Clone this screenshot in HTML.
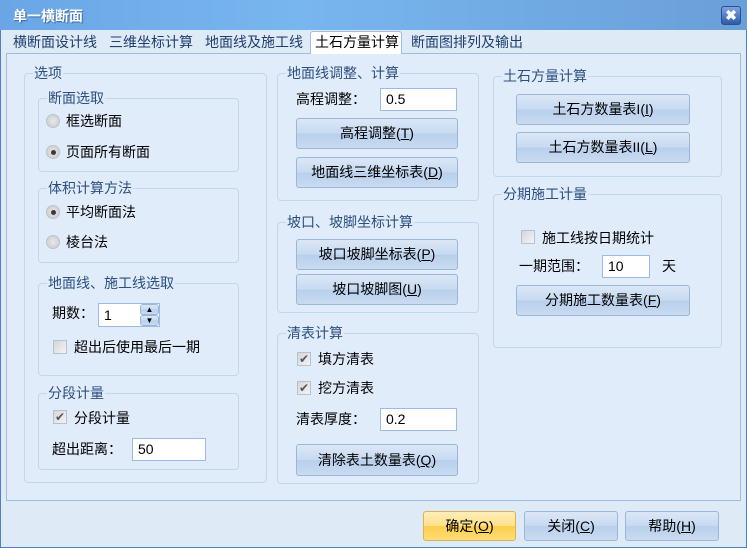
<!DOCTYPE html>
<html><head><meta charset="utf-8"><style>
*{box-sizing:border-box;margin:0;padding:0}
body{width:747px;height:548px;overflow:hidden;font-family:"Liberation Sans","Noto Sans CJK SC",sans-serif;font-size:13px;color:#000;background:#dfeaf7;position:relative}
.a{position:absolute;white-space:nowrap}
#win{position:absolute;left:0;top:0;width:747px;height:548px;border:1px solid #4f7fbf;background:#dfeaf7}
#title{position:absolute;left:0;top:0;width:747px;height:30px;background:linear-gradient(90deg,#6aa6e6,#78b6ef 40%,#6a9fd8);}
#title span{position:absolute;left:13px;top:6px;color:#fff;font-weight:bold;font-size:14px;text-shadow:1px 1px 1px #3d6aa0}
#close{position:absolute;left:721px;top:6px;width:20px;height:19px;border:1px solid #2c4f91;border-radius:3px;background:linear-gradient(#7fa3dd,#2e5aa8);color:#fff;font-weight:bold;font-size:14px;text-align:center;line-height:16px}
#tabs{position:absolute;left:6px;top:30px;width:735px;height:23px;background:#dfeaf7}
.tab{position:absolute;top:3px;color:#1f3e6c;font-size:14px}
#act{position:absolute;left:310px;top:31px;width:92px;height:23px;background:#fff;border:1px solid #9fbde0;border-bottom:none;border-radius:3px 3px 0 0}
#panel{position:absolute;left:6px;top:53px;width:735px;height:448px;background:#e1ecfa;border:1px solid #9cbde3}
.g{position:absolute;border:1px solid #c3d6ec;border-radius:4px}
.gl{position:absolute;top:-10px;left:8px;background:#e1ecfa;color:#2b4f7f;padding:0 1px;font-size:14px;line-height:18px}
.btn{position:absolute;border:1px solid #9ab6da;border-radius:3px;background:linear-gradient(#dbe7f6,#c7daf1 50%,#b8cfec 51%,#c9dbf0);text-align:center;font-size:14px;color:#000}
.inp{position:absolute;background:#fff;border:1px solid #9cbbe4;padding-left:5px;font-size:14px}
.rad{position:absolute;width:14px;height:14px;border-radius:50%;border:1px solid #b9c4d0;background:radial-gradient(#e9e9e9,#c8c8c8)}
.rad.on::after{content:"";position:absolute;left:4px;top:4px;width:5px;height:5px;border-radius:50%;background:#3a3a3a}
.chk{position:absolute;width:14px;height:14px;border:1px solid #b5c2d2;background:linear-gradient(135deg,#d6d6d6,#f4f4f4);font-size:12px;line-height:12px;color:#556;text-align:center}
.t{position:absolute;white-space:nowrap;font-size:14px;margin-top:-2px}
u{text-decoration:underline}
</style></head><body>
<div id="win"></div>
<div id="title"><span>单一横断面</span><div id="close">✖</div></div>
<div id="tabs"></div>
<div id="panel"></div>
<div id="act"></div>
<span class="tab a" style="left:13px;top:32px">横断面设计线</span>
<span class="tab a" style="left:109px;top:32px">三维坐标计算</span>
<span class="tab a" style="left:205px;top:32px">地面线及施工线</span>
<span class="tab a" style="left:315px;top:32px;color:#000">土石方量计算</span>
<span class="tab a" style="left:411px;top:32px">断面图排列及输出</span>

<div class="g" style="left:24px;top:73px;width:243px;height:410px"><span class="gl" style="left:8px">选项</span></div>
<div class="g" style="left:38px;top:98px;width:201px;height:74px"><span class="gl">断面选取</span></div>
<div class="rad" style="left:46px;top:114px"></div><span class="t" style="left:66px;top:113px">框选断面</span>
<div class="rad on" style="left:46px;top:145px"></div><span class="t" style="left:66px;top:144px">页面所有断面</span>
<div class="g" style="left:38px;top:188px;width:201px;height:75px"><span class="gl">体积计算方法</span></div>
<div class="rad on" style="left:46px;top:205px"></div><span class="t" style="left:66px;top:204px">平均断面法</span>
<div class="rad" style="left:46px;top:235px"></div><span class="t" style="left:66px;top:234px">棱台法</span>
<div class="g" style="left:38px;top:283px;width:201px;height:93px"><span class="gl">地面线、施工线选取</span></div>
<span class="t" style="left:52px;top:305px">期数：</span>
<div class="inp" style="left:98px;top:303px;width:62px;height:24px;line-height:22px">1</div>
<div class="btn" style="left:140px;top:304px;width:19px;height:11px;font-size:8px;line-height:9px">▲</div>
<div class="btn" style="left:140px;top:315px;width:19px;height:11px;font-size:8px;line-height:9px">▼</div>
<div class="chk" style="left:53px;top:340px"></div><span class="t" style="left:74px;top:339px">超出后使用最后一期</span>
<div class="g" style="left:38px;top:393px;width:201px;height:77px"><span class="gl">分段计量</span></div>
<div class="chk" style="left:53px;top:410px">✔</div><span class="t" style="left:74px;top:410px">分段计量</span>
<span class="t" style="left:52px;top:441px">超出距离：</span>
<div class="inp" style="left:132px;top:438px;width:74px;height:23px;line-height:21px">50</div>

<div class="g" style="left:277px;top:73px;width:202px;height:128px"><span class="gl">地面线调整、计算</span></div>
<span class="t" style="left:296px;top:91px">高程调整：</span>
<div class="inp" style="left:380px;top:88px;width:77px;height:23px;line-height:21px">0.5</div>
<div class="btn" style="left:296px;top:118px;width:162px;height:31px;line-height:29px">高程调整(<u>T</u>)</div>
<div class="btn" style="left:296px;top:157px;width:162px;height:31px;line-height:29px">地面线三维坐标表(<u>D</u>)</div>
<div class="g" style="left:277px;top:222px;width:202px;height:91px"><span class="gl">坡口、坡脚坐标计算</span></div>
<div class="btn" style="left:296px;top:239px;width:162px;height:31px;line-height:29px">坡口坡脚坐标表(<u>P</u>)</div>
<div class="btn" style="left:296px;top:274px;width:162px;height:31px;line-height:29px">坡口坡脚图(<u>U</u>)</div>
<div class="g" style="left:277px;top:333px;width:202px;height:151px"><span class="gl">清表计算</span></div>
<div class="chk" style="left:297px;top:352px">✔</div><span class="t" style="left:318px;top:351px">填方清表</span>
<div class="chk" style="left:297px;top:381px">✔</div><span class="t" style="left:318px;top:380px">挖方清表</span>
<span class="t" style="left:296px;top:411px">清表厚度：</span>
<div class="inp" style="left:380px;top:408px;width:77px;height:23px;line-height:21px">0.2</div>
<div class="btn" style="left:296px;top:444px;width:162px;height:32px;line-height:30px">清除表土数量表(<u>Q</u>)</div>

<div class="g" style="left:493px;top:76px;width:229px;height:101px"><span class="gl">土石方量计算</span></div>
<div class="btn" style="left:516px;top:94px;width:174px;height:31px;line-height:29px">土石方数量表I(<u>I</u>)</div>
<div class="btn" style="left:516px;top:132px;width:174px;height:31px;line-height:29px">土石方数量表II(<u>L</u>)</div>
<div class="g" style="left:493px;top:194px;width:229px;height:154px"><span class="gl">分期施工计量</span></div>
<div class="chk" style="left:521px;top:230px"></div><span class="t" style="left:542px;top:230px">施工线按日期统计</span>
<span class="t" style="left:519px;top:258px">一期范围：</span>
<div class="inp" style="left:602px;top:255px;width:48px;height:23px;line-height:21px">10</div>
<span class="t" style="left:662px;top:258px">天</span>
<div class="btn" style="left:516px;top:285px;width:174px;height:31px;line-height:29px">分期施工数量表(<u>F</u>)</div>

<div class="btn" style="left:423px;top:511px;width:93px;height:30px;line-height:28px;border-color:#d9b35a;background:linear-gradient(#fdeeb8,#fde08a 50%,#fdcf48 51%,#fedc78)">确定(<u>O</u>)</div>
<div class="btn" style="left:524px;top:511px;width:94px;height:30px;line-height:28px">关闭(<u>C</u>)</div>
<div class="btn" style="left:625px;top:511px;width:94px;height:30px;line-height:28px">帮助(<u>H</u>)</div>
</body></html>
